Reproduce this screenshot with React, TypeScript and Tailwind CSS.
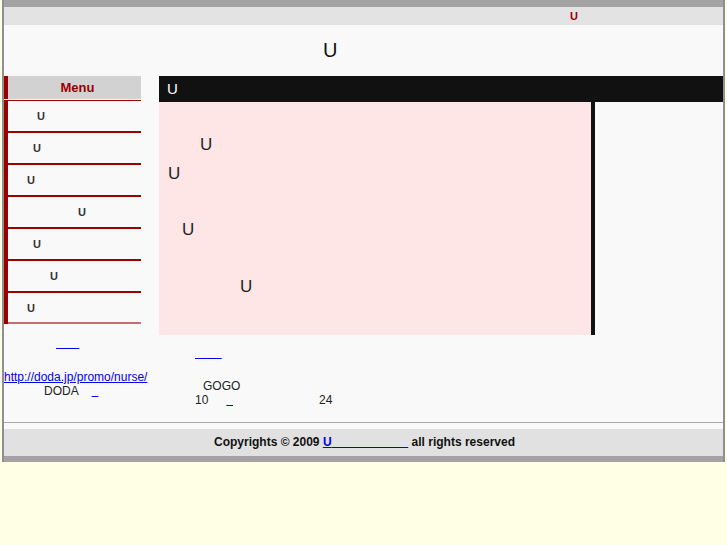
const menuItems = [29, 25, 19, 70, 25, 42, 19]

const nb = (n: number) => "\u00a0".repeat(n)

function Sidebar() {
    return (
        <div className="w-[137px] shrink-0">
            <div className="h-[23px] border-l-4 border-[#990000] bg-[#d2d2d2] pl-[6px] text-center text-[13px] font-bold leading-[23px] text-[#990000]">
                Menu
            </div>
            <div className="mt-px border-t border-[#990000] border-l-4">
                {menuItems.map((pl, i) => (
                    <div
                        key={i}
                        className={
                            i === menuItems.length - 1
                                ? "h-[31px] border-b-2 border-[#c27070] text-[11px] font-bold leading-[30px] text-[#333]"
                                : "h-[32px] border-b-2 border-[#990000] text-[11px] font-bold leading-[30px] text-[#333]"
                        }
                        style={{ paddingLeft: pl }}
                    >
                        U
                    </div>
                ))}
            </div>
            <div className="mt-[12px] pl-[52px] text-[12px] leading-[14px]">
                <a href="#" className="text-[#0000ee] underline">
                    {nb(7)}
                </a>
            </div>
            <div className="mt-[20px] text-[12px] leading-[14px]">
                <a href="#" className="text-[#0000ee] underline">
                    http://doda.jp/promo/nurse/
                </a>
            </div>
            <div className="pl-[40px] text-[12px] leading-[14px] text-[#222]">
                DODA
                <span className="ml-[13px]" />
                <a href="#" className="text-[#0000ee] underline">
                    {nb(2)}
                </a>
            </div>
        </div>
    )
}

function Main() {
    return (
        <div className="ml-[18px] flex-1">
            <div className="h-[26px] bg-[#111] pl-[8px] text-[15px] leading-[26px] text-white">
                U
            </div>
            <div className="flex">
                <div className="h-[233px] w-[436px] border-r-4 border-[#111] bg-[#ffe6e6] text-[17px] leading-[20px] text-[#222]">
                    <div className="mt-[33px] pl-[41px]">U</div>
                    <div className="mt-[9px] pl-[9px]">U</div>
                    <div className="mt-[36px] pl-[23px]">U</div>
                    <div className="mt-[37px] pl-[81px]">U</div>
                </div>
            </div>
            <div className="mt-[11px] pl-[36px] text-[12px] leading-[14px]">
                <a href="#" className="text-[#0000ee] underline">
                    {nb(8)}
                </a>
            </div>
            <div className="mt-[19px] pl-[44px] text-[12px] leading-[14px] text-[#222]">
                GOGO
            </div>
            <div className="flex pl-[36px] text-[12px] leading-[14px] text-[#222]">
                <span>10</span>
                <a href="#" className="ml-[18px] text-[#0000ee] underline">
                    {nb(2)}
                </a>
                <span className="ml-[86px]">24</span>
            </div>
        </div>
    )
}

export default function App() {
    return (
        <div className="min-h-screen bg-[#ffffe6] font-['Liberation_Sans',Arial,sans-serif]">
            <div className="ml-[2px] w-[723px] border-x-2 border-[#8f8f8f]">
                <div className="h-[7px] bg-[#a3a3a3]" />
                <div className="h-[18px] bg-[#e3e3e3] pl-[566px] text-[11px] font-bold leading-[18px] text-[#990000]">
                    U
                </div>
                <div className="bg-[#f9f9f9]">
                    <div className="h-[51px] pl-[319px] pt-[14px] text-[20px] leading-[22px] text-[#111]">
                        U
                    </div>
                    <div className="flex pb-[15px]">
                        <Sidebar />
                        <Main />
                    </div>
                    <div className="border-t border-[#a8a8a8] pt-[6px]">
                        <div className="h-[27px] bg-[#e1e1e1] pl-[2px] text-center text-[12px] font-bold leading-[27px] text-[#111]">
                            Copyrights © 2009{" "}
                            <a href="#" className="text-[#0000ee] underline">
                                U{nb(23)}
                            </a>{" "}
                            all rights reserved
                        </div>
                    </div>
                </div>
                <div className="h-[6px] bg-[#a3a3a3]" />
            </div>
        </div>
    )
}
